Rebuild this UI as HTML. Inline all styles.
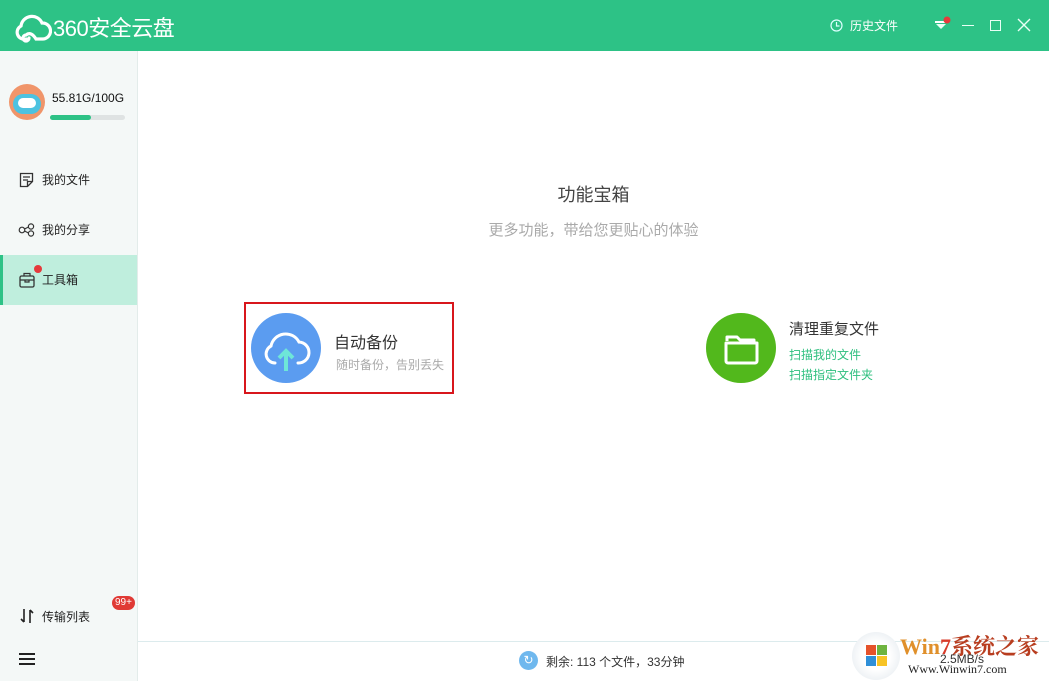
<!DOCTYPE html>
<html><head><meta charset="utf-8"><style>
*{margin:0;padding:0;box-sizing:border-box}
body{width:1049px;height:681px;overflow:hidden;font-family:"Liberation Sans","Noto Sans CJK SC",sans-serif;background:#fff;position:relative;color:#333}
.hd{position:absolute;left:0;top:0;width:1049px;height:51px;background:#2dc286}
.side{position:absolute;left:0;top:51px;width:138px;height:630px;background:#f4f8f7;border-right:1px solid #e3ecea}
.abs{position:absolute}
.nav{position:absolute;left:0;width:137px;height:50px;font-size:12px;color:#222;line-height:50px;padding-left:42px}
.cap{position:absolute;top:641px;left:138px;width:911px;height:40px;border-top:1px solid #dcebed}
</style></head><body>
<div class="hd">
 <svg class="abs" style="left:14px;top:11px" width="38" height="32" viewBox="0 0 38 32"><path d="M12 28 A7 7 0 0 1 7 15 A11 11 0 0 1 28 12 A8 8 0 0 1 29 28 L22 28 Q17 20 12 24 A3 3 0 1 0 15 27" fill="none" stroke="#fff" stroke-width="3.2" stroke-linecap="round"/></svg>
 <div class="abs" style="left:53px;top:11px;color:#fff;font-size:22px;letter-spacing:-0.5px">360安全云盘</div>
 <svg class="abs" style="left:830px;top:19px" width="13" height="13"><circle cx="6.5" cy="6.5" r="5.5" fill="none" stroke="#dff" stroke-width="1.2"/><path d="M6.5 3v4h3" fill="none" stroke="#dff" stroke-width="1.2"/></svg>
 <div class="abs" style="left:850px;top:17px;font-size:12px;color:#fff">历史文件</div>
 <svg class="abs" style="left:934px;top:15px" width="18" height="18"><rect x="1" y="6" width="12" height="2" fill="#fff"/><path d="M2 9h10L7 14z" fill="#e8fff5"/><circle cx="13" cy="5" r="3.5" fill="#e53b3b"/></svg>
 <div class="abs" style="left:962px;top:25px;width:12px;height:1px;background:#e8fff5"></div>
 <div class="abs" style="left:990px;top:20px;width:11px;height:11px;border:1.3px solid #e8fff5"></div>
 <svg class="abs" style="left:1017px;top:18px" width="14" height="14"><path d="M1 1l12 12M13 1L1 13" stroke="#e8fff5" stroke-width="1.4"/></svg>
</div>
<div class="side">
 <div class="abs" style="left:9px;top:33px;width:36px;height:36px;border-radius:50%;background:#f0956a"></div>
 <div class="abs" style="left:13px;top:43px;width:28px;height:20px;border-radius:10px;background:#4cc2e0"></div>
 <div class="abs" style="left:18px;top:47px;width:18px;height:10px;border-radius:5px;background:#fff"></div>
 <div class="abs" style="left:52px;top:40px;font-size:12px;color:#111">55.81G/100G</div>
 <div class="abs" style="left:50px;top:64px;width:75px;height:5px;border-radius:3px;background:#dfe3e3"><div style="width:41px;height:5px;border-radius:3px;background:#2dc286"></div></div>
 <div class="nav" style="top:104px">我的文件</div>
 <svg class="abs" style="left:19px;top:121px" width="16" height="16"><path d="M1.5 1.5h12v8l-5 5h-7z M13.5 9.5h-5v5" fill="none" stroke="#333" stroke-width="1.3"/><path d="M4 5h7M4 8h5" stroke="#333" stroke-width="1.2"/></svg>
 <div class="nav" style="top:154px">我的分享</div>
 <svg class="abs" style="left:18px;top:172px" width="18" height="14"><circle cx="4" cy="7" r="2.8" fill="none" stroke="#333" stroke-width="1.2"/><circle cx="13" cy="3.5" r="2.6" fill="none" stroke="#333" stroke-width="1.2"/><circle cx="13" cy="10.5" r="2.6" fill="none" stroke="#333" stroke-width="1.2"/><path d="M6.5 6l4-2M6.5 8l4 2" stroke="#333" stroke-width="1.2"/></svg>
 <div class="nav" style="top:204px;background:#bfeedd;border-left:3px solid #2dc286;padding-left:39px">工具箱</div>
 <svg class="abs" style="left:19px;top:221px" width="16" height="16"><rect x="1" y="4" width="14" height="11" rx="1.5" fill="none" stroke="#333" stroke-width="1.3"/><path d="M5 4V1.5h6V4M1 8h14M6 8v2h4V8" fill="none" stroke="#333" stroke-width="1.2"/></svg>
 <div class="abs" style="left:34px;top:214px;width:8px;height:8px;border-radius:50%;background:#e5393b"></div>
 <svg class="abs" style="left:19px;top:557px" width="16" height="16"><path d="M5 1v13M2 11l3 3M11 15V2M14 5l-3-3" fill="none" stroke="#222" stroke-width="1.6"/></svg>
 <div class="abs" style="left:42px;top:557px;font-size:12px;color:#222">传输列表</div>
 <div class="abs" style="left:112px;top:545px;height:14px;padding:0 3px;border-radius:7px;background:#e03a35;color:#fff;font-size:10px;line-height:14px">99+</div>
 <div class="abs" style="left:19px;top:602px;width:16px;height:2px;background:#222;box-shadow:0 5px 0 #222,0 10px 0 #222"></div>
</div>
<div class="abs" style="left:138px;top:181px;width:911px;text-align:center;font-size:18px;color:#444">功能宝箱</div>
<div class="abs" style="left:138px;top:219px;width:911px;text-align:center;font-size:15px;color:#aaa">更多功能，带给您更贴心的体验</div>
<div class="abs" style="left:244px;top:302px;width:210px;height:92px;border:2px solid #d8161c"></div>
<div class="abs" style="left:251px;top:313px;width:70px;height:70px;border-radius:50%;background:#5b9cf0"></div>
<svg class="abs" style="left:251px;top:313px" width="70" height="70"><path d="M24 50 A9 9 0 0 1 20 33 A15 15 0 0 1 48 29 A10 10 0 0 1 47 50" fill="none" stroke="#fff" stroke-width="3" stroke-linecap="round"/><path d="M35 58V38M28 45l7-7 7 7" fill="none" stroke="#6ee6d8" stroke-width="4"/></svg>
<div class="abs" style="left:334px;top:329px;font-size:16px;color:#333">自动备份</div>
<div class="abs" style="left:336px;top:356px;font-size:12px;color:#aaa">随时备份，告别丢失</div>
<div class="abs" style="left:706px;top:313px;width:70px;height:70px;border-radius:50%;background:#52b81c"></div>
<svg class="abs" style="left:706px;top:313px" width="70" height="70"><path d="M21 28V24h10l3 3h14v3 M20 30h31v18a2 2 0 0 1-2 2H22a2 2 0 0 1-2-2z" fill="none" stroke="#fff" stroke-width="3" stroke-linejoin="round"/></svg>
<div class="abs" style="left:789px;top:318px;font-size:15px;color:#333">清理重复文件</div>
<div class="abs" style="left:789px;top:346px;font-size:12px;color:#2dbf7e">扫描我的文件</div>
<div class="abs" style="left:789px;top:366px;font-size:12px;color:#2dbf7e">扫描指定文件夹</div>
<div class="cap"></div>
<div class="abs" style="left:519px;top:651px;width:19px;height:19px;border-radius:50%;background:#6fb8ee;color:#fff;font-size:12px;text-align:center;line-height:19px">↻</div>
<div class="abs" style="left:546px;top:653px;font-size:12px;color:#333">剩余: 113 个文件，33分钟</div>
<div class="abs" style="left:852px;top:632px;width:48px;height:48px;border-radius:50%;background:radial-gradient(circle,#fff 40%,#dfe6ec)"></div>
<div class="abs" style="left:866px;top:645px;width:10px;height:10px;background:#e5522b"></div>
<div class="abs" style="left:877px;top:645px;width:10px;height:10px;background:#6db33f"></div>
<div class="abs" style="left:866px;top:656px;width:10px;height:10px;background:#2f8fd8"></div>
<div class="abs" style="left:877px;top:656px;width:10px;height:10px;background:#f7c325"></div>
<div class="abs" style="left:900px;top:630px;font-size:22px;font-weight:bold;color:#e0902b;font-family:'Liberation Serif','Noto Serif CJK SC',serif">Win<span style="color:#d83b2a">7</span><span style="color:#b83d1f">系统之家</span></div>
<div class="abs" style="left:940px;top:652px;font-size:12px;color:#333">2.5MB/s</div>
<div class="abs" style="left:908px;top:662px;font-size:12px;color:#222;font-family:'Liberation Serif',serif">Www.Winwin7.com</div>
</body></html>
